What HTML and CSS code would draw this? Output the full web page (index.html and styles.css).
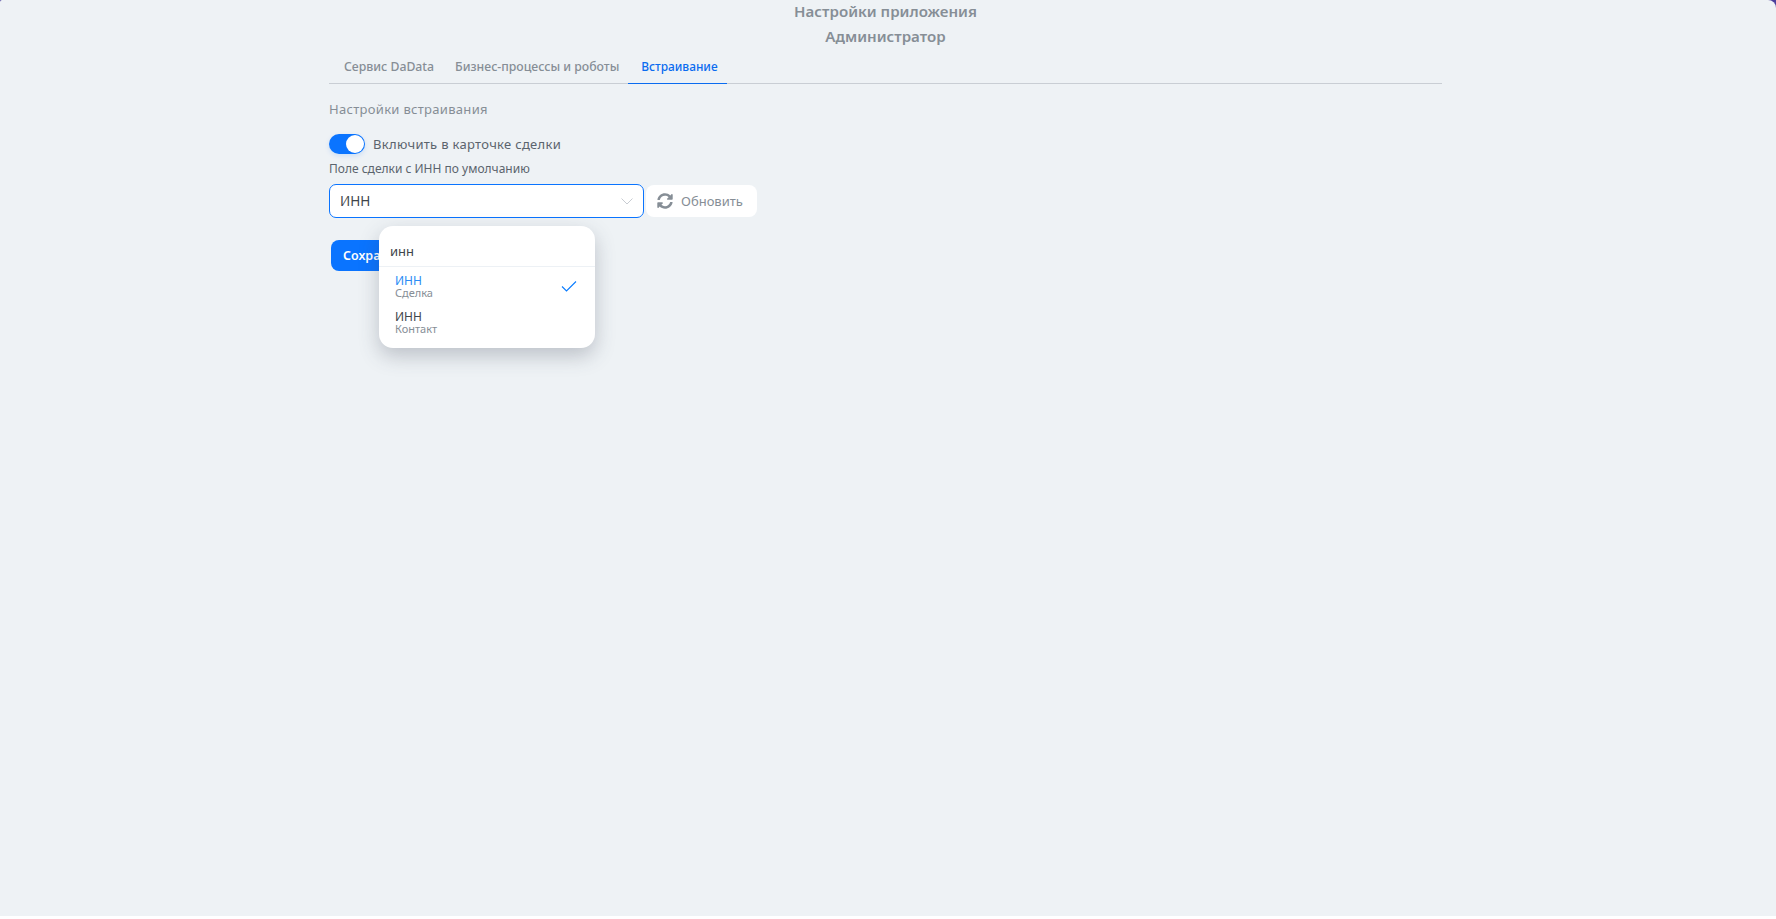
FILE: index.html
```html
<!DOCTYPE html>
<html lang="ru">
<head>
<meta charset="utf-8">
<title>Настройки приложения</title>
<link rel="stylesheet" href="styles.css">
</head>
<body>
<div class="page">
  <main class="container">
    <h1 class="title">Настройки приложения</h1>
    <h2 class="subtitle">Администратор</h2>
    <nav class="tabs">
      <a class="tab">Сервис DaData</a>
      <a class="tab">Бизнес-процессы и роботы</a>
      <a class="tab tab-active">Встраивание</a>
    </nav>
    <h3 class="section">Настройки встраивания</h3>
    <div class="toggle-row">
      <span class="toggle"><span class="knob"></span></span>
      <span class="toggle-label">Включить в карточке сделки</span>
    </div>
    <div class="field-label">Поле сделки с ИНН по умолчанию</div>
    <div class="field-row">
      <div class="select">
        <span class="select-value">ИНН</span>
        <svg class="chevron" width="12" height="7" viewBox="0 0 12 7"><path d="M.5.5 6 6 11.500.5" fill="none" stroke="#c8ccd2" stroke-width="1"/></svg>
        <div class="popup">
          <div class="search">инн</div>
          <div class="option selected">
            <div class="option-text"><div class="option-name">ИНН</div><div class="option-sub">Сделка</div></div>
            <svg class="check" width="16" height="11" viewBox="0 0 16 11"><path d="M1 5.500 5.500 10 15 .5" fill="none" stroke="#0a7cff" stroke-width="1.100"/></svg>
          </div>
          <div class="option">
            <div class="option-text"><div class="option-name">ИНН</div><div class="option-sub">Контакт</div></div>
          </div>
        </div>
      </div>
      <button class="refresh">
        <svg width="16" height="16" viewBox="0 0 512 512"><path fill="#868e96" d="M370.700 133.300C339.500 104 298.900 88 255.800 88c-77.500.1-144.300 53.200-162.800 126.900-1.300 5.400-6.100 9.100-11.600 9.100H24.100c-7.500 0-13.200-6.800-11.800-14.200C34 94.100 135.800 8 256 8c66 0 125.900 26 170.200 68.200L461.700 40.700C476.800 25.600 502.600 36.300 502.600 57.600V192c0 13.300-10.700 24-24 24H344.200c-21.400 0-32-25.900-17-41l43.500-41.700zM32 296h134.400c21.400 0 32 25.900 17 41l-41.900 41.900c31.400 29.300 72 45.300 115 45.100 77.400-.1 144.300-53.100 162.800-126.800 1.300-5.400 6.100-9.100 11.600-9.100h57.300c7.500 0 13.200 6.800 11.800 14.200C478 417.900 376.200 504 256 504c-66 0-125.900-26-170.200-68.200l-35.500 35.500C35.200 486.400 9.400 475.700 9.400 454.400V320c0-13.300 10.700-24 22.600-24z"/></svg>
        <span>Обновить</span>
      </button>
    </div>
    <button class="save">Сохранить</button>
  </main>
</div>
</body>
</html>
```
FILE: styles.css
```css
* { box-sizing: border-box; }
html { background: #fff; }
body { margin: 0; height: 919px; overflow: hidden; font-family: "Noto Sans", "Open Sans", sans-serif; background: linear-gradient(#4b3f9c 50%, #fff 50%); }
.page { height: 916px; background: #eef2f5; border-radius: 2px 8px 0 0; }
.container { width: 1113px; margin-left: 329px; display: flex; flex-direction: column; align-items: flex-start; }
.title, .subtitle { align-self: center; margin: 0; font-size: 15.100px; font-weight: 600; line-height: 25px; color: #868e96; }
.title { height: 25px; margin-top: -1px; }
.subtitle { height: 26px; }
.tabs { width: 100%; display: flex; height: 34px; border-bottom: 1px solid #c9ced4; padding-left: 4.500px; }
.tab { padding: 8px 10.500px 0; font-size: 12.250px; font-weight: 500; line-height: 17px; color: #868e96; margin-bottom: -1px; white-space: nowrap; }
.tab-active { color: #0a6cf0; font-size: 11.900px; border-bottom: 1px solid #0a6cf0; margin-left: -1.500px; padding-left: 13px; padding-right: 9px; }
.section { margin: 16px 0 0; font-size: 13px; font-weight: 400; line-height: 18px; color: #868e96; letter-spacing: .3px; }
.toggle-row { display: flex; align-items: center; gap: 8px; margin-top: 15px; height: 22px; }
.toggle { width: 36px; height: 20px; border-radius: 10px; background: #0a74ff; display: flex; align-items: center; justify-content: flex-end; padding-right: 1px; box-shadow: 0 2px 5px rgba(10,116,255,.15); }
.knob { width: 18px; height: 18px; border-radius: 50%; background: #fff; }
.toggle-label { font-size: 13px; line-height: 18px; color: #5b646d; letter-spacing: .3px; }
.field-label { margin-top: 5px; font-size: 12px; line-height: 18px; color: #5b646d; }
.field-row { display: flex; align-items: center; gap: 2px; margin-top: 6px; }
.select { position: relative; width: 315px; height: 34px; background: #fff; border: 1px solid #0a74ff; border-radius: 7px; display: flex; align-items: center; justify-content: space-between; padding: 0 10px; }
.select-value { font-size: 13.500px; color: #3f454b; }
.popup { position: absolute; left: 49px; top: 41px; width: 216px; height: 122px; background: #fff; border-radius: 14px; box-shadow: 0 8px 20px rgba(60,70,85,.28); z-index: 2; }
.search { height: 41px; padding: 16px 11px 0; font-size: 13px; line-height: 18px; color: #3f454b; border-bottom: 1px solid #edf1f5; }
.option { height: 36px; padding: 2px 18px 0 16px; display: flex; align-items: center; justify-content: space-between; }
.option-name { font-size: 12px; line-height: 13px; color: #3f454b; }
.option-sub { font-size: 11px; line-height: 12px; color: #868e96; }
.selected .option-name { color: #2c8cf5; }
.refresh { width: 111px; height: 32px; background: #fff; border: 0; border-radius: 8px; padding: 0 0 0 11px; display: flex; align-items: center; gap: 8px; font-family: inherit; font-size: 13px; color: #868e96; }
.save { margin: 22px 0 0 2px; width: 120px; height: 31px; border: 0; border-radius: 8px; background: #0a74ff; color: #fff; font-family: inherit; font-size: 12.500px; font-weight: 600; text-align: left; padding: 0 12px; }
```
